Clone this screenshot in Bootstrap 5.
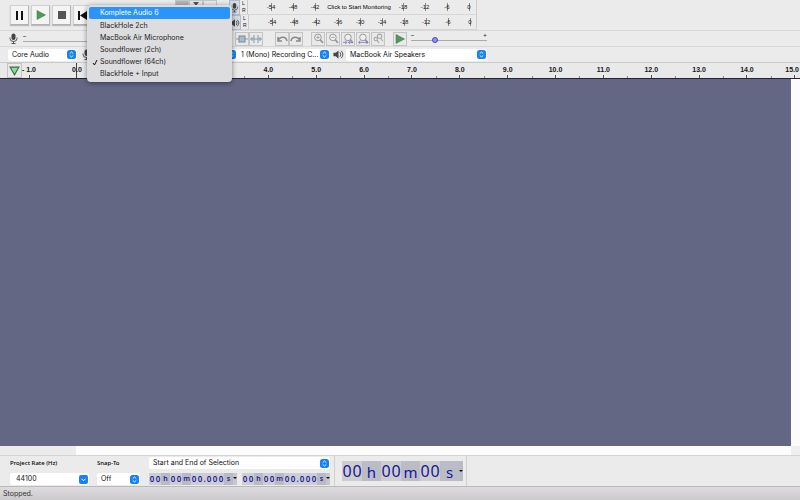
<!DOCTYPE html>
<html lang="en">
<head>
<meta charset="utf-8">
<meta name="viewport" content="width=device-width, initial-scale=1">
<title>Audio editor</title>
<link rel="stylesheet" href="https://cdn.jsdelivr.net/npm/bootstrap@5.3.0/dist/css/bootstrap.min.css">
<style>
body{font-family:Inter,"Liberation Sans",sans-serif;font-size:7px;line-height:12px;color:#161616;background:#ebebeb;overflow:hidden}
svg{display:block;flex:none}
.bar{border-bottom:1px solid #d8d8d8}
.bar-transport{height:31px}
.bar-edit{height:16px}
.bar-device{height:15px}
.lead-cell{width:229px;flex:none}
.transport{gap:2px;padding-left:10px}
.edit-tools{padding-left:6px}
.tool{width:14px;height:14px;padding:0;border:1px solid #c4c4c4;background:#e9e9e9;border-radius:0;display:flex;align-items:center;justify-content:center;flex:none}
.tool-lg{width:19px;height:20px;background:#f4f4f4;border-color:#d0d0d0 #b5b5b5 #b0b0b0 #d0d0d0;box-shadow:0 1px 1px #bbb}
.tool-on{background:#b5b5b8}
.meters{width:248px;flex:none;border-right:1px solid #cfcfcf}
.meter-line{height:15px;border-bottom:1px solid #d6d6d6}
.meter-btn{width:12px;height:15px;padding:0;border:1px solid #aebccb;background:#d6dbe1;border-radius:0;display:flex;align-items:center;justify-content:center}
.lr{width:8px;flex:none;font:5px/7px "Liberation Sans",sans-serif;padding-left:2px;border-right:1px solid #c9c9c9}
.scale{font:6px/15px "Liberation Sans",sans-serif;padding-left:12px;text-align:center}
.scale span{width:22px;flex:none;background:linear-gradient(#888,#888) 11px 3px/1px 8px no-repeat}
.scale .prompt{width:66px;font-family:"Liberation Sans",sans-serif;white-space:nowrap;background:none;border:0;padding:0;line-height:15px;font-size:6px;color:#000}
.picker{appearance:none;height:12px;border:0;border-radius:2px;padding:0 12px 0 4px;font-size:7px;line-height:12px;color:#111;text-overflow:clip;
 background:#fff url("data:image/svg+xml,%3Csvg xmlns='http://www.w3.org/2000/svg' viewBox='0 0 18 18'%3E%3Crect width='18' height='18' rx='5' fill='%231682f5'/%3E%3Cpath d='M5.500 7.200 9 4l3.500 3.200M5.500 10.800 9 14l3.500-3.200' fill='none' stroke='white' stroke-width='1.800'/%3E%3C/svg%3E") right 1px center/9px 9px no-repeat}
.picker-combo{background-image:url("data:image/svg+xml,%3Csvg xmlns='http://www.w3.org/2000/svg' viewBox='0 0 18 18'%3E%3Crect width='18' height='18' rx='4' fill='%231682f5'/%3E%3Cpath d='M5 7.500 9 11.500l4-4' fill='none' stroke='white' stroke-width='2'/%3E%3C/svg%3E");padding-left:6px}
.w-host{width:69px}.w-input{width:141px}.w-chan{width:93px}.w-out{width:141px}
.out-icon{margin:0 2px 0 3px}
.fader{appearance:none;height:6px;background:linear-gradient(#aaa,#aaa) 0 3px/100% 1px no-repeat;margin:0;padding:0}
.fader::-webkit-slider-thumb{appearance:none;width:6px;height:6px;border-radius:50%;background:#8f96ee;border:1px solid #4046c4}
.fader-rec{width:130px}.fader-play{width:76px}
.fader-ends{font-size:6px;line-height:5px}
.ruler{height:17px;border-bottom:1px solid #25252f;border-top:1px solid #cacaca;background:#e9e9e9;font:bold 7px/14px "Liberation Sans",sans-serif;text-align:center}
.ruler-start{width:53px;flex:none}
.ruler-pin{width:15px;height:15px;margin-left:7px}
.ruler-neg{width:30px;text-align:left;background:linear-gradient(#555,#555) 7px bottom/1px 3px no-repeat}
.tick{flex:1 1 0;min-width:0;background:linear-gradient(#555,#555) center bottom/1px 3px no-repeat,linear-gradient(#888,#888) left bottom/1px 2px no-repeat}
.tick-zero{background:linear-gradient(#444,#444) center bottom/1px 100% no-repeat}
.tick-end{width:29px;flex:none;text-align:right;padding-right:1px;background:linear-gradient(#555,#555) 23px bottom/1px 3px no-repeat,linear-gradient(#888,#888) left bottom/1px 2px no-repeat}
.tracks{background:#636784}
.vscroll{width:9px;background:#fbfbfb}
.hscroll{height:9px;background:#fcfcfc}
.hscroll-gap{width:76px;background:#ebebeb}
.hscroll-corner{width:9px;background:#efefef}
.selection-bar{height:31px;border-top:1px solid #d4d4d4;background:#ebebeb}
.panel{border-right:1px solid #d0d0d0}
.panel-form{padding:1px 4px 1px 10px}
.panel-clock{padding:0 3px 0 7px}
.panel-label{font-family:"Noto Sans",sans-serif;font-size:6px;line-height:13px;font-weight:500;white-space:nowrap;color:#000}
.col-rate{width:79px}.col-snap{width:43px}.col-range{width:181px;margin-left:1px}
.clock{height:12px;background:#c9c9d2;color:#20208c;font:600 8px/12px "Noto Sans",sans-serif;width:88px}
.clock span{flex:1 1 0;min-width:0;text-align:center;background:#cdcdd8}
.clock .unit{flex:0 0 9px;background:#babac6;font-size:7px}
.clock .dot{flex:0 0 3px}
.clock .drop{flex:0 0 4px;color:#111;background:#c6c6cc}
.caret{width:4px;border:2px solid transparent;border-top:2px solid #111;border-bottom:0}
.clock-lg{width:121px;height:20px;font:400 16px/20px "Noto Sans",sans-serif;color:#15159a}
.clock-lg span{flex:0 0 10px;background:#cdcdcd}
.clock-lg .unit{flex:1 1 0;background:#babdc6;font-size:15px;line-height:22px}
.clock-lg .drop{flex:0 0 4px;background:#b8bbc4}
.status{height:14px;border-top:1px solid #b9b9b9;background:linear-gradient(#dedcde,#cbc9cb);line-height:13px;padding-left:3px;color:#333}
.device-menu{position:absolute;left:87px;top:5px;width:145px;min-width:0;padding:2px;border:0;border-radius:4px;background:#dddddf;box-shadow:0 1px 5px #0007;font-size:7px;color:#222}
.device-menu .dropdown-item{height:12px;line-height:12px;padding:0 0 0 11px;border-radius:2px;font-size:7px;color:#222}
.device-menu .dropdown-item.active{background:#2995fb;color:#fff;margin-bottom:1px}
.device-menu .ticked{padding-left:3px}
.check{margin-right:2px}
</style>
<script src="https://cdn.jsdelivr.net/npm/bootstrap@5.3.0/dist/js/bootstrap.bundle.min.js"></script>
</head>
<body class="d-flex flex-column vh-100">
<svg width="0" height="0" class="d-none" aria-hidden="true">
 <symbol id="mic" viewBox="0 0 20 22"><rect x="6" y="1" width="8" height="13" rx="4" fill="#444"/><path d="M3 9v2a7 6 0 0 0 14 0V9M10 17v4M6 21h8" fill="none" stroke="#555" stroke-width="2"/></symbol>
 <symbol id="speaker" viewBox="0 0 24 22"><path d="M1 7h5l6-5v18l-6-5H1z" fill="#444"/><path d="M15 6q4 5 0 10M18 3q7 8 0 16" fill="none" stroke="#444" stroke-width="2"/></symbol>
 <symbol id="lens" viewBox="0 0 20 20"><circle cx="9" cy="8" r="6" fill="#eee" stroke="#999" stroke-width="1.800"/><path d="m13 12 5 6" stroke="#999" stroke-width="3"/></symbol>
 <symbol id="play" viewBox="0 0 20 20"><path d="m2 1 17 9-17 9z" fill="#4f9a5c" stroke="#37743f"/></symbol>
</svg>

<header>
 <div class="bar bar-transport d-flex">
  <div class="lead-cell d-flex">
   <div class="transport d-flex align-items-center">
    <button class="tool tool-lg" aria-label="Pause"><svg width="9" height="9" viewBox="0 0 9 9"><path d="M1 0h2v9H1zM6 0h2v9H6z" fill="#111"/></svg></button>
    <button class="tool tool-lg" aria-label="Play"><svg width="10" height="10"><use href="#play"/></svg></button>
    <button class="tool tool-lg" aria-label="Stop"><svg width="8" height="8"><rect width="8" height="8" fill="#555"/></svg></button>
    <button class="tool tool-lg" aria-label="Skip to start"><svg width="9" height="9" viewBox="0 0 9 9"><path d="M0 0h2v9H0zM9 0v9L2 4.500z" fill="#111"/></svg></button>
   </div>
   <div class="d-flex ms-auto pe-2 me-1">
    <button class="tool tool-on" aria-label="Selection tool"></button>
    <button class="tool" aria-label="Envelope tool"><svg width="8" height="12" viewBox="0 0 8 12"><path d="M1 1h6L4 5z" fill="#555"/></svg></button>
    <button class="tool" aria-label="Draw tool"></button>
   </div>
  </div>
  <div class="meters">
   <div class="meter-line d-flex">
    <button class="meter-btn" aria-label="Recording meter"><svg width="9" height="11"><use href="#mic"/></svg></button>
    <div class="lr">L<br>R</div>
    <div class="scale d-flex"><span>-54</span><span>-48</span><span>-42</span><button class="prompt flex-shrink-0">Click to Start Monitoring</button><span>-18</span><span>-12</span><span>-6</span><span>0</span></div>
   </div>
   <div class="meter-line d-flex">
    <button class="meter-btn" aria-label="Playback meter"><svg width="10" height="10"><use href="#speaker"/></svg></button>
    <div class="lr">L<br>R</div>
    <div class="scale d-flex"><span>-54</span><span>-48</span><span>-42</span><span>-36</span><span>-30</span><span>-24</span><span>-18</span><span>-12</span><span>-6</span><span>0</span></div>
   </div>
  </div>
 </div>

 <div class="bar bar-edit d-flex align-items-center">
  <div class="lead-cell d-flex align-items-center ps-2">
   <svg width="11" height="11" class="me-1"><use href="#mic"/></svg>
   <div><div class="fader-ends">–</div><input class="fader fader-rec d-block" type="range" min="0" max="100" value="70" aria-label="Recording volume"></div>
  </div>
  <div class="edit-tools d-flex">
   <div class="d-flex me-2">
    <button class="tool" aria-label="Trim audio"><svg width="12" height="10" viewBox="0 0 12 10"><path d="M0 5h12" stroke="#999"/><rect x="3" y="2" width="6" height="6" fill="#abc" stroke="#789"/></svg></button>
    <button class="tool" aria-label="Silence audio"><svg width="12" height="10" viewBox="0 0 12 10"><path d="M0 5h12M2 3v4M4 1v8M8 1v8M10 3v4" stroke="#8699ac"/></svg></button>
   </div>
   <div class="d-flex me-2 ps-1">
    <button class="tool" aria-label="Undo"><svg width="12" height="10" viewBox="0 0 12 10"><path d="M2 3v4h4M2 7c2-5 8-5 9 0" fill="none" stroke="#888" stroke-width="1.500"/></svg></button>
    <button class="tool" aria-label="Redo"><svg width="12" height="10" viewBox="0 0 12 10"><path d="M10 3v4H6M10 7C8 2 2 2 1 7" fill="none" stroke="#888" stroke-width="1.500"/></svg></button>
   </div>
   <div class="d-flex me-2" style="gap:1px">
    <button class="tool" aria-label="Zoom in"><svg width="11" height="11" viewBox="0 0 20 20"><use href="#lens"/><path d="M6 8h6M9 5v6" stroke="#999" stroke-width="1.500"/></svg></button>
    <button class="tool" aria-label="Zoom out"><svg width="11" height="11" viewBox="0 0 20 20"><use href="#lens"/><path d="M6 8h6" stroke="#999" stroke-width="1.500"/></svg></button>
    <button class="tool" aria-label="Fit selection"><svg width="11" height="11" viewBox="0 0 20 20"><use href="#lens"/><path d="M0 17h7M10 17h8M4 14l3 3-3 3M13 14l-3 3 3 3" fill="none" stroke="#77b" stroke-width="1.500"/></svg></button>
    <button class="tool" aria-label="Fit project"><svg width="11" height="11" viewBox="0 0 20 20"><use href="#lens"/><path d="M1 17h17M4 14l-3 3 3 3M15 14l3 3-3 3" fill="none" stroke="#77b" stroke-width="1.500"/></svg></button>
    <button class="tool" aria-label="Zoom toggle"><svg width="11" height="11" viewBox="0 0 20 20"><circle cx="12" cy="6" r="4" fill="none" stroke="#aaa" stroke-width="2"/><circle cx="5" cy="11" r="3" fill="none" stroke="#aaa" stroke-width="2"/><path d="m14 9 4 6M7 13l4 5" stroke="#aaa" stroke-width="2"/></svg></button>
   </div>
   <button class="tool" aria-label="Play at speed"><svg width="10" height="10"><use href="#play"/></svg></button>
   <div class="ps-1"><div class="fader-ends d-flex justify-content-between"><span>–</span><span>+</span></div><input class="fader fader-play d-block" type="range" min="0" max="100" value="30" aria-label="Playback speed"></div>
  </div>
 </div>

 <div class="bar-device d-flex align-items-center ps-2">
  <select class="picker w-host" aria-label="Audio host"><option>Core Audio</option></select>
  <svg width="11" height="11" class="ms-1 me-1"><use href="#mic"/></svg>
  <select class="picker w-input" aria-label="Recording device"><option></option></select>
  <select class="picker w-chan" aria-label="Recording channels"><option>1 (Mono) Recording C...</option></select>
  <svg width="11" height="11" class="out-icon"><use href="#speaker"/></svg>
  <select class="picker w-out" aria-label="Playback device"><option>MacBook Air Speakers</option></select>
 </div>

 <div class="ruler d-flex">
  <div class="ruler-start d-flex">
   <button class="tool ruler-pin" aria-label="Pin play head"><svg width="11" height="10" viewBox="0 0 10 9"><path d="M1 1h8L5 8z" fill="#8fdc98" stroke="#376b40"/></svg></button>
   <span class="ruler-neg">- 1.0</span>
  </div>
  <span class="tick tick-zero">0.0</span><span class="tick"></span><span class="tick"></span><span class="tick"></span><span class="tick">4.0</span><span class="tick">5.0</span><span class="tick">6.0</span><span class="tick">7.0</span><span class="tick">8.0</span><span class="tick">9.0</span><span class="tick">10.0</span><span class="tick">11.0</span><span class="tick">12.0</span><span class="tick">13.0</span><span class="tick">14.0</span><span class="tick-end">15.0</span>
 </div>
</header>

<main class="flex-grow-1 d-flex">
 <div class="tracks flex-grow-1"></div>
 <div class="vscroll"></div>
</main>
<div class="hscroll d-flex justify-content-between"><div class="hscroll-gap"></div><div class="hscroll-corner"></div></div>

<footer>
 <div class="selection-bar d-flex">
  <div class="panel panel-form d-flex gap-2">
   <div class="col-rate d-flex flex-column justify-content-between">
    <label class="panel-label" for="rate">Project Rate (Hz)</label>
    <select id="rate" class="picker picker-combo w-100"><option>44100</option></select>
   </div>
   <div class="col-snap d-flex flex-column justify-content-between">
    <label class="panel-label" for="snap">Snap-To</label>
    <select id="snap" class="picker w-100"><option>Off</option></select>
   </div>
   <div class="col-range d-flex flex-column justify-content-between">
    <select class="picker w-100" aria-label="Selection mode"><option>Start and End of Selection</option></select>
    <div class="d-flex justify-content-between">
     <div class="clock d-flex"><span>0</span><span>0</span><span class="unit">h</span><span>0</span><span>0</span><span class="unit">m</span><span>0</span><span>0</span><span class="dot">.</span><span>0</span><span>0</span><span>0</span><span class="unit">s</span><span class="drop pt-1"><i class="caret d-block"></i></span></div>
     <div class="clock d-flex"><span>0</span><span>0</span><span class="unit">h</span><span>0</span><span>0</span><span class="unit">m</span><span>0</span><span>0</span><span class="dot">.</span><span>0</span><span>0</span><span>0</span><span class="unit">s</span><span class="drop pt-1"><i class="caret d-block"></i></span></div>
    </div>
   </div>
  </div>
  <div class="panel panel-clock d-flex align-items-center">
   <div class="clock clock-lg d-flex"><span>0</span><span>0</span><span class="unit">h</span><span>0</span><span>0</span><span class="unit">m</span><span>0</span><span>0</span><span class="unit">s</span><span class="drop d-flex align-items-center"><i class="caret d-block"></i></span></div>
  </div>
 </div>
 <div class="status">Stopped.</div>
</footer>

<div class="dropdown-menu device-menu show">
 <button class="dropdown-item active">Komplete Audio 6</button>
 <button class="dropdown-item">BlackHole 2ch</button>
 <button class="dropdown-item">MacBook Air Microphone</button>
 <button class="dropdown-item">Soundflower (2ch)</button>
 <button class="dropdown-item ticked d-flex align-items-center"><svg class="check" width="6" height="7" viewBox="0 0 6 7"><path d="m1 4 1.500 2L5 1" fill="none" stroke="#111"/></svg>Soundflower (64ch)</button>
 <button class="dropdown-item">BlackHole + Input</button>
</div>
</body>
</html>
